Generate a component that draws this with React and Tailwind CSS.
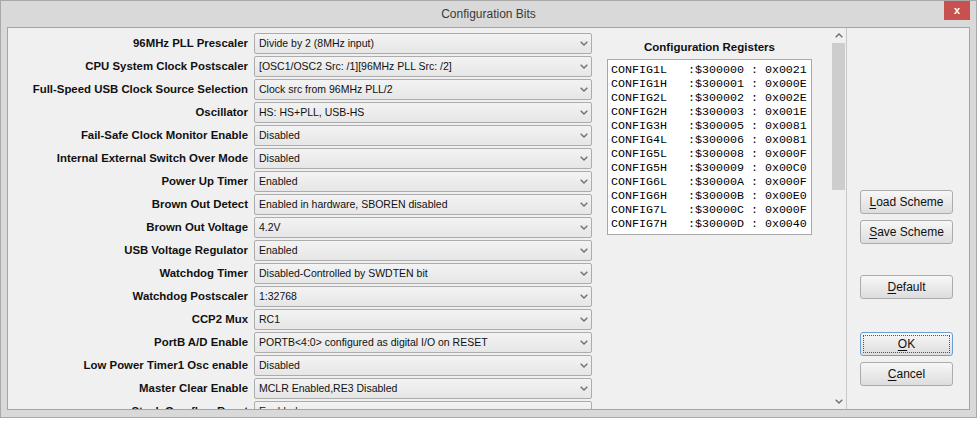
import React from 'react';

const rows = [
  ['96MHz PLL Prescaler', 'Divide by 2 (8MHz input)'],
  ['CPU System Clock Postscaler', '[OSC1/OSC2 Src: /1][96MHz PLL Src: /2]'],
  ['Full-Speed USB Clock Source Selection', 'Clock src from 96MHz PLL/2'],
  ['Oscillator', 'HS: HS+PLL, USB-HS'],
  ['Fail-Safe Clock Monitor Enable', 'Disabled'],
  ['Internal External Switch Over Mode', 'Disabled'],
  ['Power Up Timer', 'Enabled'],
  ['Brown Out Detect', 'Enabled in hardware, SBOREN disabled'],
  ['Brown Out Voltage', '4.2V'],
  ['USB Voltage Regulator', 'Enabled'],
  ['Watchdog Timer', 'Disabled-Controlled by SWDTEN bit'],
  ['Watchdog Postscaler', '1:32768'],
  ['CCP2 Mux', 'RC1'],
  ['PortB A/D Enable', 'PORTB<4:0> configured as digital I/O on RESET'],
  ['Low Power Timer1 Osc enable', 'Disabled'],
  ['Master Clear Enable', 'MCLR Enabled,RE3 Disabled'],
  ['Stack Overflow Reset', 'Enabled'],
];

const regs = [
  ['CONFIG1L', '300000', '0x0021'],
  ['CONFIG1H', '300001', '0x000E'],
  ['CONFIG2L', '300002', '0x002E'],
  ['CONFIG2H', '300003', '0x001E'],
  ['CONFIG3H', '300005', '0x0081'],
  ['CONFIG4L', '300006', '0x0081'],
  ['CONFIG5L', '300008', '0x000F'],
  ['CONFIG5H', '300009', '0x00C0'],
  ['CONFIG6L', '30000A', '0x000F'],
  ['CONFIG6H', '30000B', '0x00E0'],
  ['CONFIG7L', '30000C', '0x000F'],
  ['CONFIG7H', '30000D', '0x0040'],
];

function Chevron({ up }) {
  return (
    <svg width="8" height="5" viewBox="0 0 8 5">
      <path
        d={up ? 'M0.7 4.3 L4 1 L7.3 4.3' : 'M0.7 0.7 L4 4 L7.3 0.7'}
        fill="none"
        stroke="#707070"
        strokeWidth="1.4"
      />
    </svg>
  );
}

function Select({ value }) {
  return (
    <div className="flex h-[21px] w-[338px] shrink-0 items-center justify-between rounded-[2px] border border-[#acacac] bg-gradient-to-b from-[#f3f3f3] to-[#e6e6e6] pl-[4px] pr-[3px]">
      <span className="whitespace-pre text-[10.5px] text-[#111]">{value}</span>
      <Chevron />
    </div>
  );
}

function Btn({ u, post, focus, className = '' }) {
  return (
    <div
      className={`flex h-[24px] w-[93px] items-center justify-center rounded-[3px] border bg-gradient-to-b from-[#f7f7f7] to-[#dddddd] p-[2px] text-[12px] text-[#111] ${
        focus ? 'border-[#6f9fd0]' : 'border-[#acacac]'
      } ${className}`}
    >
      <div
        className={`flex h-full w-full items-center justify-center ${
          focus ? 'border border-dotted border-[#555]' : ''
        }`}
      >
        <span>
          <span className="underline underline-offset-2">{u}</span>
          {post}
        </span>
      </div>
    </div>
  );
}

export default function App() {
  return (
    <div className="h-[422px] w-[977px] bg-white font-['Liberation_Sans',Arial,sans-serif]">
      <div className="relative flex h-[418px] w-[977px] flex-col border border-[#a9a9a9] bg-[#d9d9d9]">
        {/* Title bar */}
        <div className="flex h-[26px] shrink-0 items-center justify-center text-[12px] text-[#3a3a3a]">
          Configuration Bits
        </div>
        <div className="absolute right-[6px] top-0 flex h-[19px] w-[26px] items-center justify-center bg-[#c75050] text-[11px] font-bold text-white">
          x
        </div>

        {/* Body */}
        <div className="flex min-h-0 flex-1 px-[6px] pb-[7px]">
          <div className="flex min-h-0 flex-1 border border-[#a5a5a5] bg-[#f0f0f0]">
            {/* Scrollable pane */}
            <div className="flex h-full min-h-0 w-[839px] shrink-0 overflow-hidden border-r border-[#c8c8c8]">
              <div className="flex min-h-0 flex-1 overflow-hidden">
                {/* Form rows */}
                <div className="flex shrink-0 flex-col gap-[2px] pt-[5px]">
                  {rows.map(([label, value]) => (
                    <div key={label} className="flex h-[21px] shrink-0 items-center gap-[6px]">
                      <div className="w-[240px] whitespace-nowrap text-right text-[11.4px] font-bold text-[#111]">
                        {label}
                      </div>
                      <Select value={value} />
                    </div>
                  ))}
                </div>

                {/* Configuration registers */}
                <div className="ml-[15px] flex w-[205px] shrink-0 flex-col items-center pt-[12px]">
                  <div className="h-[14px] text-[11.5px] font-bold leading-[14px] text-[#111]">
                    Configuration Registers
                  </div>
                  <div className="mt-[5px] w-[205px] border border-[#a8a8a8] bg-white px-[3px] pb-[3px] pt-[3px]">
                    {regs.map(([name, addr, val]) => (
                      <div
                        key={name}
                        className="h-[14px] whitespace-pre font-['Liberation_Mono','Courier_New',monospace] text-[11.67px] leading-[14px] text-black"
                      >
                        {`${name}   :$${addr} : ${val}`}
                      </div>
                    ))}
                  </div>
                </div>
              </div>

              {/* Scrollbar */}
              <div className="flex w-[15px] shrink-0 flex-col items-center bg-[#f0f0f0]">
                <div className="flex h-[15px] w-full items-center justify-center">
                  <Chevron up />
                </div>
                <div className="h-[147px] w-[13px] bg-[#cdcdcd]" />
                <div className="flex-1" />
                <div className="flex h-[15px] w-full items-center justify-center">
                  <Chevron />
                </div>
              </div>
            </div>

            {/* Button column */}
            <div className="flex flex-1 flex-col pl-[13px] pt-[162px]">
              <Btn u="L" post="oad Scheme" />
              <Btn u="S" post="ave Scheme" className="mt-[6px]" />
              <Btn u="D" post="efault" className="mt-[31px]" />
              <Btn u="O" post="K" focus className="mt-[33px]" />
              <Btn u="C" post="ancel" className="mt-[6px]" />
            </div>
          </div>
        </div>
      </div>
    </div>
  );
}
